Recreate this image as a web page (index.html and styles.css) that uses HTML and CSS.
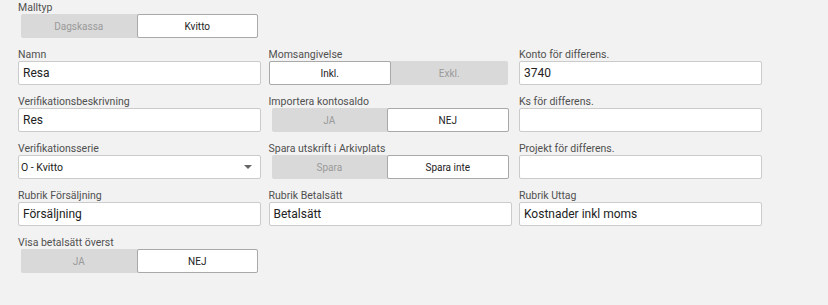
FILE: index.html
```html
<!DOCTYPE html>
<html lang="sv">
<head>
<meta charset="utf-8">
<title>Malltyp</title>
<link rel="stylesheet" href="styles.css">
</head>
<body>
<div class="form">
  <div class="field">
    <div class="label">Malltyp</div>
    <div class="seg inset"><span class="opt">Dagskassa</span><span class="opt on">Kvitto</span></div>
  </div>
  <div class="field"></div>
  <div class="field"></div>

  <div class="field">
    <div class="label">Namn</div>
    <div class="input">Resa</div>
  </div>
  <div class="field">
    <div class="label">Momsangivelse</div>
    <div class="seg moms"><span class="opt on">Inkl.</span><span class="opt">Exkl.</span></div>
  </div>
  <div class="field">
    <div class="label">Konto för differens.</div>
    <div class="input">3740</div>
  </div>

  <div class="field">
    <div class="label">Verifikationsbeskrivning</div>
    <div class="input">Res</div>
  </div>
  <div class="field">
    <div class="label">Importera kontosaldo</div>
    <div class="seg inset"><span class="opt">JA</span><span class="opt on">NEJ</span></div>
  </div>
  <div class="field">
    <div class="label">Ks för differens.</div>
    <div class="input"></div>
  </div>

  <div class="field">
    <div class="label">Verifikationsserie</div>
    <div class="select"><span>O - Kvitto</span><span class="caret"></span></div>
  </div>
  <div class="field">
    <div class="label">Spara utskrift i Arkivplats</div>
    <div class="seg inset"><span class="opt">Spara</span><span class="opt on">Spara inte</span></div>
  </div>
  <div class="field">
    <div class="label">Projekt för differens.</div>
    <div class="input"></div>
  </div>

  <div class="field">
    <div class="label">Rubrik Försäljning</div>
    <div class="input">Försäljning</div>
  </div>
  <div class="field">
    <div class="label">Rubrik Betalsätt</div>
    <div class="input">Betalsätt</div>
  </div>
  <div class="field">
    <div class="label">Rubrik Uttag</div>
    <div class="input">Kostnader inkl moms</div>
  </div>

  <div class="field">
    <div class="label">Visa betalsätt överst</div>
    <div class="seg inset"><span class="opt">JA</span><span class="opt on">NEJ</span></div>
  </div>
</div>
</body>
</html>
```

FILE: styles.css
```css
html, body {
  margin: 0;
  padding: 0;
  background: #f2f2f2;
  font-family: Roboto, "Liberation Sans", sans-serif;
}

.form {
  display: grid;
  grid-template-columns: 243px 243px 243px;
  column-gap: 7.5px;
  row-gap: 10px;
  padding: 1px 0 0 18px;
}

.field {
  display: flex;
  flex-direction: column;
  min-height: 37px;
}

.label {
  font-size: 10.5px;
  line-height: 13px;
  color: #505050;
  white-space: nowrap;
}

.input {
  box-sizing: border-box;
  height: 24px;
  background: #fff;
  border: 1px solid #cbcbcb;
  border-radius: 2px;
  padding: 0 4px;
  font-size: 12px;
  line-height: 22px;
  color: #222;
}

.select {
  box-sizing: border-box;
  height: 24px;
  background: #fff;
  border: 1px solid #cbcbcb;
  border-radius: 2px;
  padding: 0 8px 0 2px;
  font-size: 10.5px;
  color: #222;
  display: flex;
  align-items: center;
}

.caret {
  margin-left: auto;
  width: 0;
  height: 0;
  border-left: 4px solid transparent;
  border-right: 4px solid transparent;
  border-top: 4px solid #666;
}

.seg {
  box-sizing: border-box;
  height: 24px;
  background: #d9d9d9;
  border-radius: 2px;
  display: flex;
}

.seg.inset {
  margin: 0 3px;
}

.seg.moms {
  margin: 0 4px 0 0;
}

.opt {
  flex: 117 1 0;
  display: flex;
  align-items: center;
  justify-content: center;
  font-size: 10px;
  color: #9a9a9a;
}

.opt.on {
  flex: 121 1 0;
  background: #fff;
  border: 1px solid #a9a9a9;
  border-radius: 2px;
  color: #222;
}
```
